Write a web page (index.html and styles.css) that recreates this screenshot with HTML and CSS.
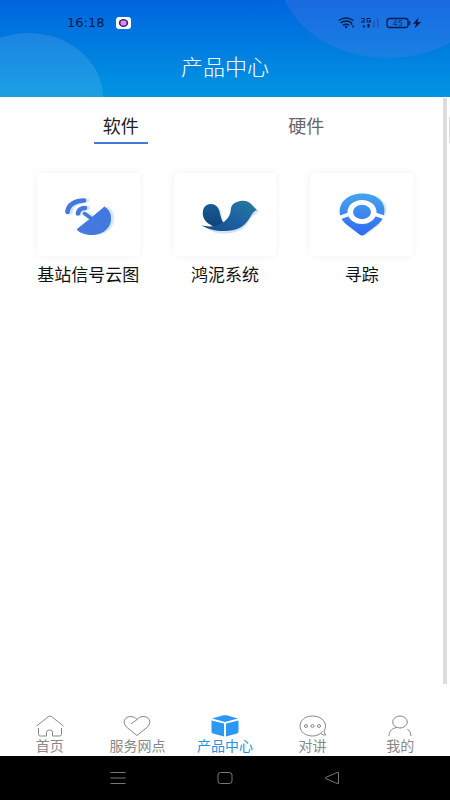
FILE: index.html
```html
<!DOCTYPE html>
<html lang="zh-CN">
<head>
<meta charset="utf-8">
<meta name="viewport" content="width=device-width, initial-scale=1">
<title>产品中心</title>
<link rel="stylesheet" href="styles.css">
</head>
<body>
<div class="app">
  <header class="header">
    <svg class="header-art" viewBox="0 0 450 97" preserveAspectRatio="none" aria-hidden="true">
      <ellipse cx="28" cy="97" rx="75" ry="64" fill="#fff" fill-opacity=".11"/>
      <ellipse cx="388" cy="-30" rx="110" ry="88" fill="#6a7dec" fill-opacity=".24"/>
    </svg>
    <div class="status">
      <div class="status-side">
        <time class="clock">16:18</time>
        <svg width="16" height="14" viewBox="0 0 16 14" aria-hidden="true">
          <rect x="0" y="1" width="15" height="12" rx="3" fill="#fff"/>
          <ellipse cx="7.5" cy="7" rx="4.7" ry="4" fill="#3c1d6e"/>
          <rect x="4.5" y="4.5" width="6" height="5" rx="2" fill="#d58df2"/>
        </svg>
      </div>
      <svg width="84" height="14" viewBox="338 16 84 14" aria-hidden="true">
        <g fill="none" stroke="#061c50" stroke-width="1.5">
          <path d="M338.500 20.500Q346 15.500 353.500 20.500M340.500 23Q346 19 352 23M343 25.300Q346 23 349 25.300"/>
        </g>
        <circle cx="346" cy="27" r="1.2" fill="#061c50"/>
        <path d="M351.500 23v2M353 25.500v2" fill="none" stroke="#061c50" stroke-width="1.500"/>
        <g fill="none" stroke="#061c50" stroke-width="1">
          <path d="M361 18.500h3.500v1.500l-3 2h3.500M370.500 18.500h-3.500v3.500h3.500v-1.700h-1.500"/>
        </g>
        <path d="M363 25.500h2v2h-2zM367.500 24h2v3.500h-2z" fill="#061c50"/>
        <path d="M373 21h1.500v6.500H373zM377 18h1.500v9.500H377z" fill="#1b55b8"/>
        <rect x="387" y="18.500" width="21" height="9" rx="2.500" fill="none" stroke="#061c50" stroke-width="1.300"/>
        <path d="M409.500 21v4" stroke="#061c50" stroke-width="1.500"/>
        <text class="battery-text" x="397.500" y="26" text-anchor="middle">45</text>
        <path d="M418.500 17.500l-5.500 6.300h3l-1.500 4.700 6.500-6.500h-3.500z" fill="#061c50"/>
      </svg>
    </div>
    <h1 class="title">产品中心</h1>
  </header>

  <main class="content">
    <div class="tabs" role="tablist">
      <button class="tab tab-active" type="button" role="tab" aria-selected="true">软件</button>
      <button class="tab" type="button" role="tab" aria-selected="false">硬件</button>
    </div>
    <div class="products">
      <a class="product" href="#signal">
        <span class="card">
          <svg width="80" height="70" viewBox="48 180 80 70" aria-hidden="true">
            <defs>
              <g id="dish">
                <path d="M104.500 207C109 210 111 214 110.500 220C110 229 101.500 234.500 92 234.500C86 234.500 80.500 233 77 229.500L89.500 219.500L92 217.500Z" stroke-width="1"/>
                <path d="M84.500 213.500L92 219" fill="none" stroke-width="3.500" stroke-linecap="round"/>
                <path d="M67.500 212C68 204.500 75.500 200.500 84 200.500M78 213.500C78.500 210 81 208 85 208" fill="none" stroke-width="4.700" stroke-linecap="round"/>
              </g>
            </defs>
            <use href="#dish" x="3" fill="#d5e8fc" stroke="#d5e8fc"/>
            <use href="#dish" fill="#4379df" stroke="#4379df"/>
          </svg>
        </span>
        <span class="product-name">基站信号云图</span>
      </a>
      <a class="product" href="#hongni">
        <span class="card">
          <svg width="80" height="70" viewBox="185 180 80 70" aria-hidden="true">
            <defs>
              <linearGradient id="wing" x1="0" y1="0" x2="0" y2="1"><stop offset="0" stop-color="#175c95"/><stop offset="1" stop-color="#123f74"/></linearGradient>
              <linearGradient id="bird" x1="1" y1="0" x2="0" y2="1"><stop offset="0" stop-color="#267b9e"/><stop offset=".5" stop-color="#1d62a2"/><stop offset="1" stop-color="#144c85"/></linearGradient>
            </defs>
            <path d="M206 228C212 232 219 234.500 227 233.500C243 232 246 226 251 218C252.500 215.500 256 215.500 259 211L255 209L236 224Z" fill="#d5e2f3"/>
            <path d="M211 207C216 203 222 208 222 218L225 224L217 225Z" fill="#d5e8f8"/>
            <path d="M203 211C204 203.500 214 201.500 218 208C220.500 212 220 218 224 224L220 229C211 226 201 221 203 211Z" fill="url(#wing)"/>
            <path d="M201 225C211 228 219 226 225 221C234 213 228 208 234 203.500C241 199 249 200.500 253 206L257 210C252 212 252 215 249 219C244 227 237 231 224 231C215 231 208 229 201 225Z" fill="url(#bird)"/>
          </svg>
        </span>
        <span class="product-name">鸿泥系统</span>
      </a>
      <a class="product" href="#trace">
        <span class="card">
          <svg width="80" height="70" viewBox="322 180 80 70" aria-hidden="true">
            <defs>
              <linearGradient id="pin" gradientUnits="userSpaceOnUse" x1="362" y1="193" x2="362" y2="236"><stop offset="0" stop-color="#46a5ef"/><stop offset="1" stop-color="#3068f2"/></linearGradient>
            </defs>
            <path d="M343 216C337 202 348 194 364 194C382 194 390 205 385 216L379 225L366 235Q363 237 360 234Z" fill="#d3e6fb"/>
            <path d="M340.500 216.500C336.500 203 348 193.500 362 193.500C377 193.500 388 203 383.500 216.500Q382 221 377 225L364.500 234.500Q362 236.500 359.500 234.500L347 225Q342 221 340.500 216.500Z" fill="url(#pin)"/>
            <path d="M338.500 218L351 213.500M386 218L373 213.500" stroke="#fff" stroke-width="3.500"/>
            <ellipse cx="362" cy="212" rx="14.500" ry="12" fill="#fff"/>
            <ellipse cx="362" cy="212" rx="9" ry="7.200" fill="url(#pin)"/>
          </svg>
        </span>
        <span class="product-name">寻踪</span>
      </a>
    </div>
    <span class="scroll-track" aria-hidden="true"></span>
    <span class="edge-handle" aria-hidden="true"></span>
  </main>

  <nav class="navbar">
    <a class="nav-item" href="#home">
      <svg class="nav-icon" width="28" height="24" viewBox="0 0 28 24" aria-hidden="true"><path d="M.5 12L12.500 2.500Q14 1.500 15.500 2.500L27.500 12M2.500 14v6.500q0 1.500 2 1.500h6v-4q0-2 3-2t3 2v4h7q2 0 2-1.500V14"/></svg>
      <span>首页</span>
    </a>
    <a class="nav-item" href="#service">
      <svg class="nav-icon" width="28" height="24" viewBox="0 0 28 24" aria-hidden="true"><path d="M14 21.500L3.500 13C-1 8 1.500 2.500 8 2.500Q12 2.500 14 5.500Q16 2.500 20 2.500C26.500 2.500 29 8 24.500 13L14 21.500M14 5.500L8 10"/></svg>
      <span>服务网点</span>
    </a>
    <a class="nav-item nav-active" href="#products" aria-current="page">
      <svg class="nav-icon" width="28" height="24" viewBox="0 0 28 24" aria-hidden="true"><path d="M1 4.500L12.500 1.300Q14 1 15.500 1.300L27 4.500L14 8Z"/><path d="M.5 6.500L13 9.500V22.500L2 19.500Q.5 19 .5 17.500Z"/><path d="M27.500 6.500L15 9.500V22.500L26 19.500Q27.500 19 27.500 17.500Z"/></svg>
      <span>产品中心</span>
    </a>
    <a class="nav-item" href="#talk">
      <svg class="nav-icon" width="28" height="24" viewBox="0 0 28 24" aria-hidden="true"><path d="M23.500 17.500C21 20.500 17.500 22 13.500 22C6 22 1 17.500 1 12S6 2 13.500 2S26.500 6.500 26.500 12Q26.500 15 25 17Q25 19.500 27 21Q24 21.500 21.500 19.500"/><ellipse cx="7" cy="12" rx="1.600" ry="1.400"/><ellipse cx="13.500" cy="12" rx="1.600" ry="1.400"/><ellipse cx="20" cy="12" rx="1.600" ry="1.400"/></svg>
      <span>对讲</span>
    </a>
    <a class="nav-item" href="#mine">
      <svg class="nav-icon" width="28" height="24" viewBox="0 0 28 24" aria-hidden="true"><ellipse cx="14" cy="8" rx="7.300" ry="6"/><path d="M3 22C3 17 6.500 14 11 13.500M21.500 15Q25 17.500 25 22"/></svg>
      <span>我的</span>
    </a>
  </nav>

  <footer class="system-bar">
    <button class="system-button" type="button" aria-label="最近任务"><svg width="16" height="14" viewBox="0 0 16 14"><path d="M.5 1.500h15M.5 7h15M.5 12.500h15"/></svg></button>
    <button class="system-button" type="button" aria-label="主屏幕"><svg width="16" height="14" viewBox="0 0 16 14"><rect x="1" y="1.500" width="14" height="11" rx="2.500"/></svg></button>
    <button class="system-button" type="button" aria-label="返回"><svg width="16" height="14" viewBox="0 0 16 14"><path d="M14.500 1.500v11q-1.500 0-3-.7L1.500 7.500q-.8-.5 0-1L11.500 2.200q1.500-.7 3-.7z"/></svg></button>
  </footer>
</div>
</body>
</html>
```

FILE: styles.css
```css
* {
  box-sizing: border-box;
}

body {
  margin: 0;
  font-family: "Noto Sans CJK SC", sans-serif;
  background: #fff;
}

a {
  color: inherit;
  text-decoration: none;
}

button {
  padding: 0;
  border: 0;
  background: none;
  font: inherit;
}

svg {
  display: block;
}

.app {
  display: flex;
  flex-direction: column;
  min-height: 100vh;
}

.header {
  position: relative;
  padding: 16px 28px 17px 67px;
  background: linear-gradient(#0065de, #0095e2);
}

.header-art {
  position: absolute;
  inset: 0;
  width: 100%;
  height: 100%;
}

.status {
  position: relative;
  display: flex;
  align-items: center;
  justify-content: space-between;
  height: 14px;
}

.status-side {
  display: flex;
  align-items: center;
  gap: 12px;
}

.clock {
  font-family: "DejaVu Sans", sans-serif;
  font-size: 13px;
  line-height: 14px;
  color: #04184f;
}

.battery-text {
  font-family: Inter, sans-serif;
  font-size: 8px;
  fill: #0b2f70;
}

.title {
  position: relative;
  margin: 20px -28px 0 -67px;
  font-size: 22px;
  font-weight: 300;
  line-height: 30px;
  text-align: center;
  color: #fff;
}

.content {
  position: relative;
  flex: 1;
}

.tabs {
  display: grid;
  grid-template-columns: 1fr 1fr;
  justify-items: center;
  padding: 16px 51px 0 28px;
}

.tab {
  width: 54px;
  height: 31px;
  padding-bottom: 5px;
  border-bottom: 2px solid transparent;
  font-size: 18px;
  line-height: 24px;
  color: #666;
}

.tab-active {
  border-color: #4379d9;
  color: #222;
}

.products {
  display: grid;
  grid-template-columns: repeat(3, 1fr);
  padding: 29px 20px;
}

.product {
  display: flex;
  flex-direction: column;
  gap: 6px;
  font-size: 17px;
  line-height: 24px;
  text-align: center;
  white-space: nowrap;
  color: #111;
}

.card {
  display: flex;
  align-items: center;
  justify-content: center;
  height: 83px;
  margin: 0 17px;
  border-radius: 4px;
  background: #fff;
  box-shadow: 0 0 8px rgba(0, 0, 0, 0.06);
}

.scroll-track {
  position: absolute;
  top: 1px;
  right: 3px;
  bottom: 24px;
  width: 4px;
  background: #dddde1;
}

.edge-handle {
  position: absolute;
  top: 20px;
  right: 0;
  width: 1px;
  height: 26px;
  background: #dddde1;
}

.navbar {
  display: grid;
  grid-template-columns: repeat(5, 1fr);
  padding: 6px 6px 4px;
}

.nav-item {
  display: flex;
  flex-direction: column;
  align-items: center;
  font-size: 14px;
  line-height: 14px;
  color: #888;
}

.nav-icon {
  fill: none;
  stroke: #888;
  stroke-width: 1;
}

.nav-active {
  color: #2793d9;
}

.nav-active .nav-icon {
  fill: #2c98f5;
  stroke: none;
}

.system-bar {
  display: grid;
  grid-template-columns: repeat(3, 1fr);
  height: 44px;
  padding: 0 64px;
  background: #000;
}

.system-button {
  display: flex;
  align-items: center;
  justify-content: center;
}

.system-button svg {
  fill: none;
  stroke: #777;
  stroke-width: 1;
}
```
